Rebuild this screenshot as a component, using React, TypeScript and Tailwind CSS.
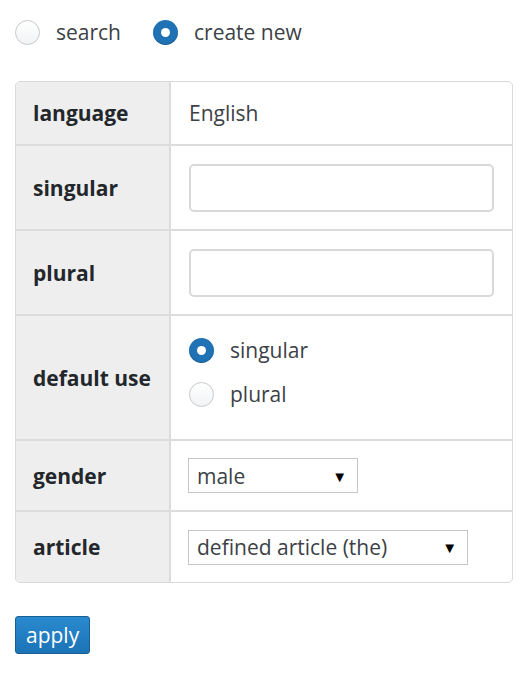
import React, { useState } from 'react';

const Radio: React.FC<{ checked: boolean; onClick: () => void; label: string }> = ({ checked, onClick, label }) => (
  <label onClick={onClick} className="flex items-center gap-[16px] cursor-pointer">
    {checked ? (
      <span className="w-[25px] h-[25px] rounded-full bg-[#1f72b4] flex items-center justify-center shadow-[inset_0_-1px_1px_rgba(0,0,0,0.2)]">
        <span className="w-[9px] h-[9px] rounded-full bg-white" />
      </span>
    ) : (
      <span className="w-[25px] h-[25px] rounded-full border border-[#c9c9c9] bg-gradient-to-b from-white to-[#f1f3f5]" />
    )}
    <span className="text-[#3c4146]">{label}</span>
  </label>
);

const FakeSelect: React.FC<{ value: string; width: string }> = ({ value, width }) => (
  <div className={`${width} h-[35px] border border-[#c6c6c6] bg-white flex items-center justify-between pl-[8px] pr-[10px]`}>
    <span className="text-[#3c4146]">{value}</span>
    <span className="text-[15px] text-black">▼</span>
  </div>
);

const App: React.FC = () => {
  const [mode, setMode] = useState('create');
  const [use, setUse] = useState('singular');

  return (
    <div className="min-h-[678px] bg-white text-[21px] leading-[28px]" style={{ fontFamily: '"Open Sans", "Noto Sans", sans-serif' }}>
      <div className="flex items-center gap-[32px] pl-[15px] pt-[18px]">
        <Radio checked={mode === 'search'} onClick={() => setMode('search')} label="search" />
        <Radio checked={mode === 'create'} onClick={() => setMode('create')} label="create new" />
      </div>

      <div className="ml-[15px] mt-[35px] w-[498px] border border-[#d9d9d9] rounded-[5px] overflow-hidden">
        <div className="flex h-[64px] border-b-2 border-[#dcdcdc]">
          <div className="w-[155px] shrink-0 bg-[#eeeeee] border-r-2 border-[#dcdcdc] flex items-center pl-[17px] font-bold text-[#23272b]">language</div>
          <div className="flex-1 flex items-center pl-[18px] text-[#3c4146]">English</div>
        </div>
        <div className="flex h-[85px] border-b-2 border-[#dcdcdc]">
          <div className="w-[155px] shrink-0 bg-[#eeeeee] border-r-2 border-[#dcdcdc] flex items-center pl-[17px] font-bold text-[#23272b]">singular</div>
          <div className="flex-1 flex items-center pl-[18px]">
            <input className="w-[305px] h-[48px] border-2 border-[#d9d9d9] rounded-[5px] outline-none px-2" />
          </div>
        </div>
        <div className="flex h-[85px] border-b-2 border-[#dcdcdc]">
          <div className="w-[155px] shrink-0 bg-[#eeeeee] border-r-2 border-[#dcdcdc] flex items-center pl-[17px] font-bold text-[#23272b]">plural</div>
          <div className="flex-1 flex items-center pl-[18px]">
            <input className="w-[305px] h-[48px] border-2 border-[#d9d9d9] rounded-[5px] outline-none px-2" />
          </div>
        </div>
        <div className="flex h-[125px] border-b-2 border-[#dcdcdc]">
          <div className="w-[155px] shrink-0 bg-[#eeeeee] border-r-2 border-[#dcdcdc] flex items-center pl-[17px] font-bold text-[#23272b]">default use</div>
          <div className="flex-1 flex flex-col justify-start gap-[16px] pl-[18px] pt-[20px]">
            <Radio checked={use === 'singular'} onClick={() => setUse('singular')} label="singular" />
            <Radio checked={use === 'plural'} onClick={() => setUse('plural')} label="plural" />
          </div>
        </div>
        <div className="flex h-[71px] border-b-2 border-[#dcdcdc]">
          <div className="w-[155px] shrink-0 bg-[#eeeeee] border-r-2 border-[#dcdcdc] flex items-center pl-[17px] font-bold text-[#23272b]">gender</div>
          <div className="flex-1 flex items-center pl-[17px]">
            <FakeSelect value="male" width="w-[170px]" />
          </div>
        </div>
        <div className="flex h-[70px]">
          <div className="w-[155px] shrink-0 bg-[#eeeeee] border-r-2 border-[#dcdcdc] flex items-center pl-[17px] font-bold text-[#23272b]">article</div>
          <div className="flex-1 flex items-center pl-[17px]">
            <FakeSelect value="defined article (the)" width="w-[280px]" />
          </div>
        </div>
      </div>

      <button className="ml-[15px] mt-[33px] h-[38px] px-[10px] rounded-[3px] border border-[#1a5e92] bg-gradient-to-b from-[#2a8ad0] to-[#1b73b5] text-white leading-none">
        apply
      </button>
    </div>
  );
};

export default App;
